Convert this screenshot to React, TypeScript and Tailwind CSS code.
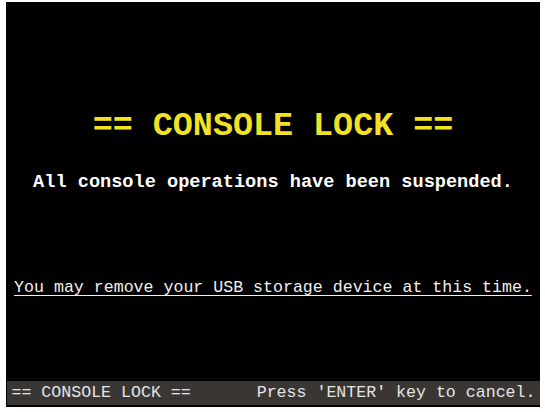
export default function App() {
  const mono = { fontFamily: '"Liberation Mono", "DejaVu Sans Mono", monospace' };
  return (
    <div className="w-[545px] h-[412px] bg-white pl-[6px] pr-[5px] pt-[2px] pb-[5px]">
      <div className="w-full h-full bg-black flex flex-col items-center" style={mono}>
        <div className="mt-[107px] h-[34px] leading-[34px] text-[33.4px] font-bold text-[#f2e224] whitespace-pre">
          == CONSOLE LOCK ==
        </div>
        <div className="mt-[30px] h-[19px] leading-[19px] text-[18.6px] font-bold text-white whitespace-pre">
          All console operations have been suspended.
        </div>
        <div className="mt-[87px] h-[17px] leading-[17px] text-[16.6px] text-[#f0f0f0] whitespace-pre underline decoration-1 underline-offset-[3px]">
          You may remove your USB storage device at this time.
        </div>
        <div className="mt-auto mb-[2px] w-[533px] h-[24px] bg-[#3a3634] flex items-center justify-between pl-[5px] pr-[4px] text-[16.6px] leading-[24px] text-[#e4e4e4] whitespace-pre">
          <span>== CONSOLE LOCK ==</span>
          <span>{"Press 'ENTER' key to cancel."}</span>
        </div>
      </div>
    </div>
  );
}
